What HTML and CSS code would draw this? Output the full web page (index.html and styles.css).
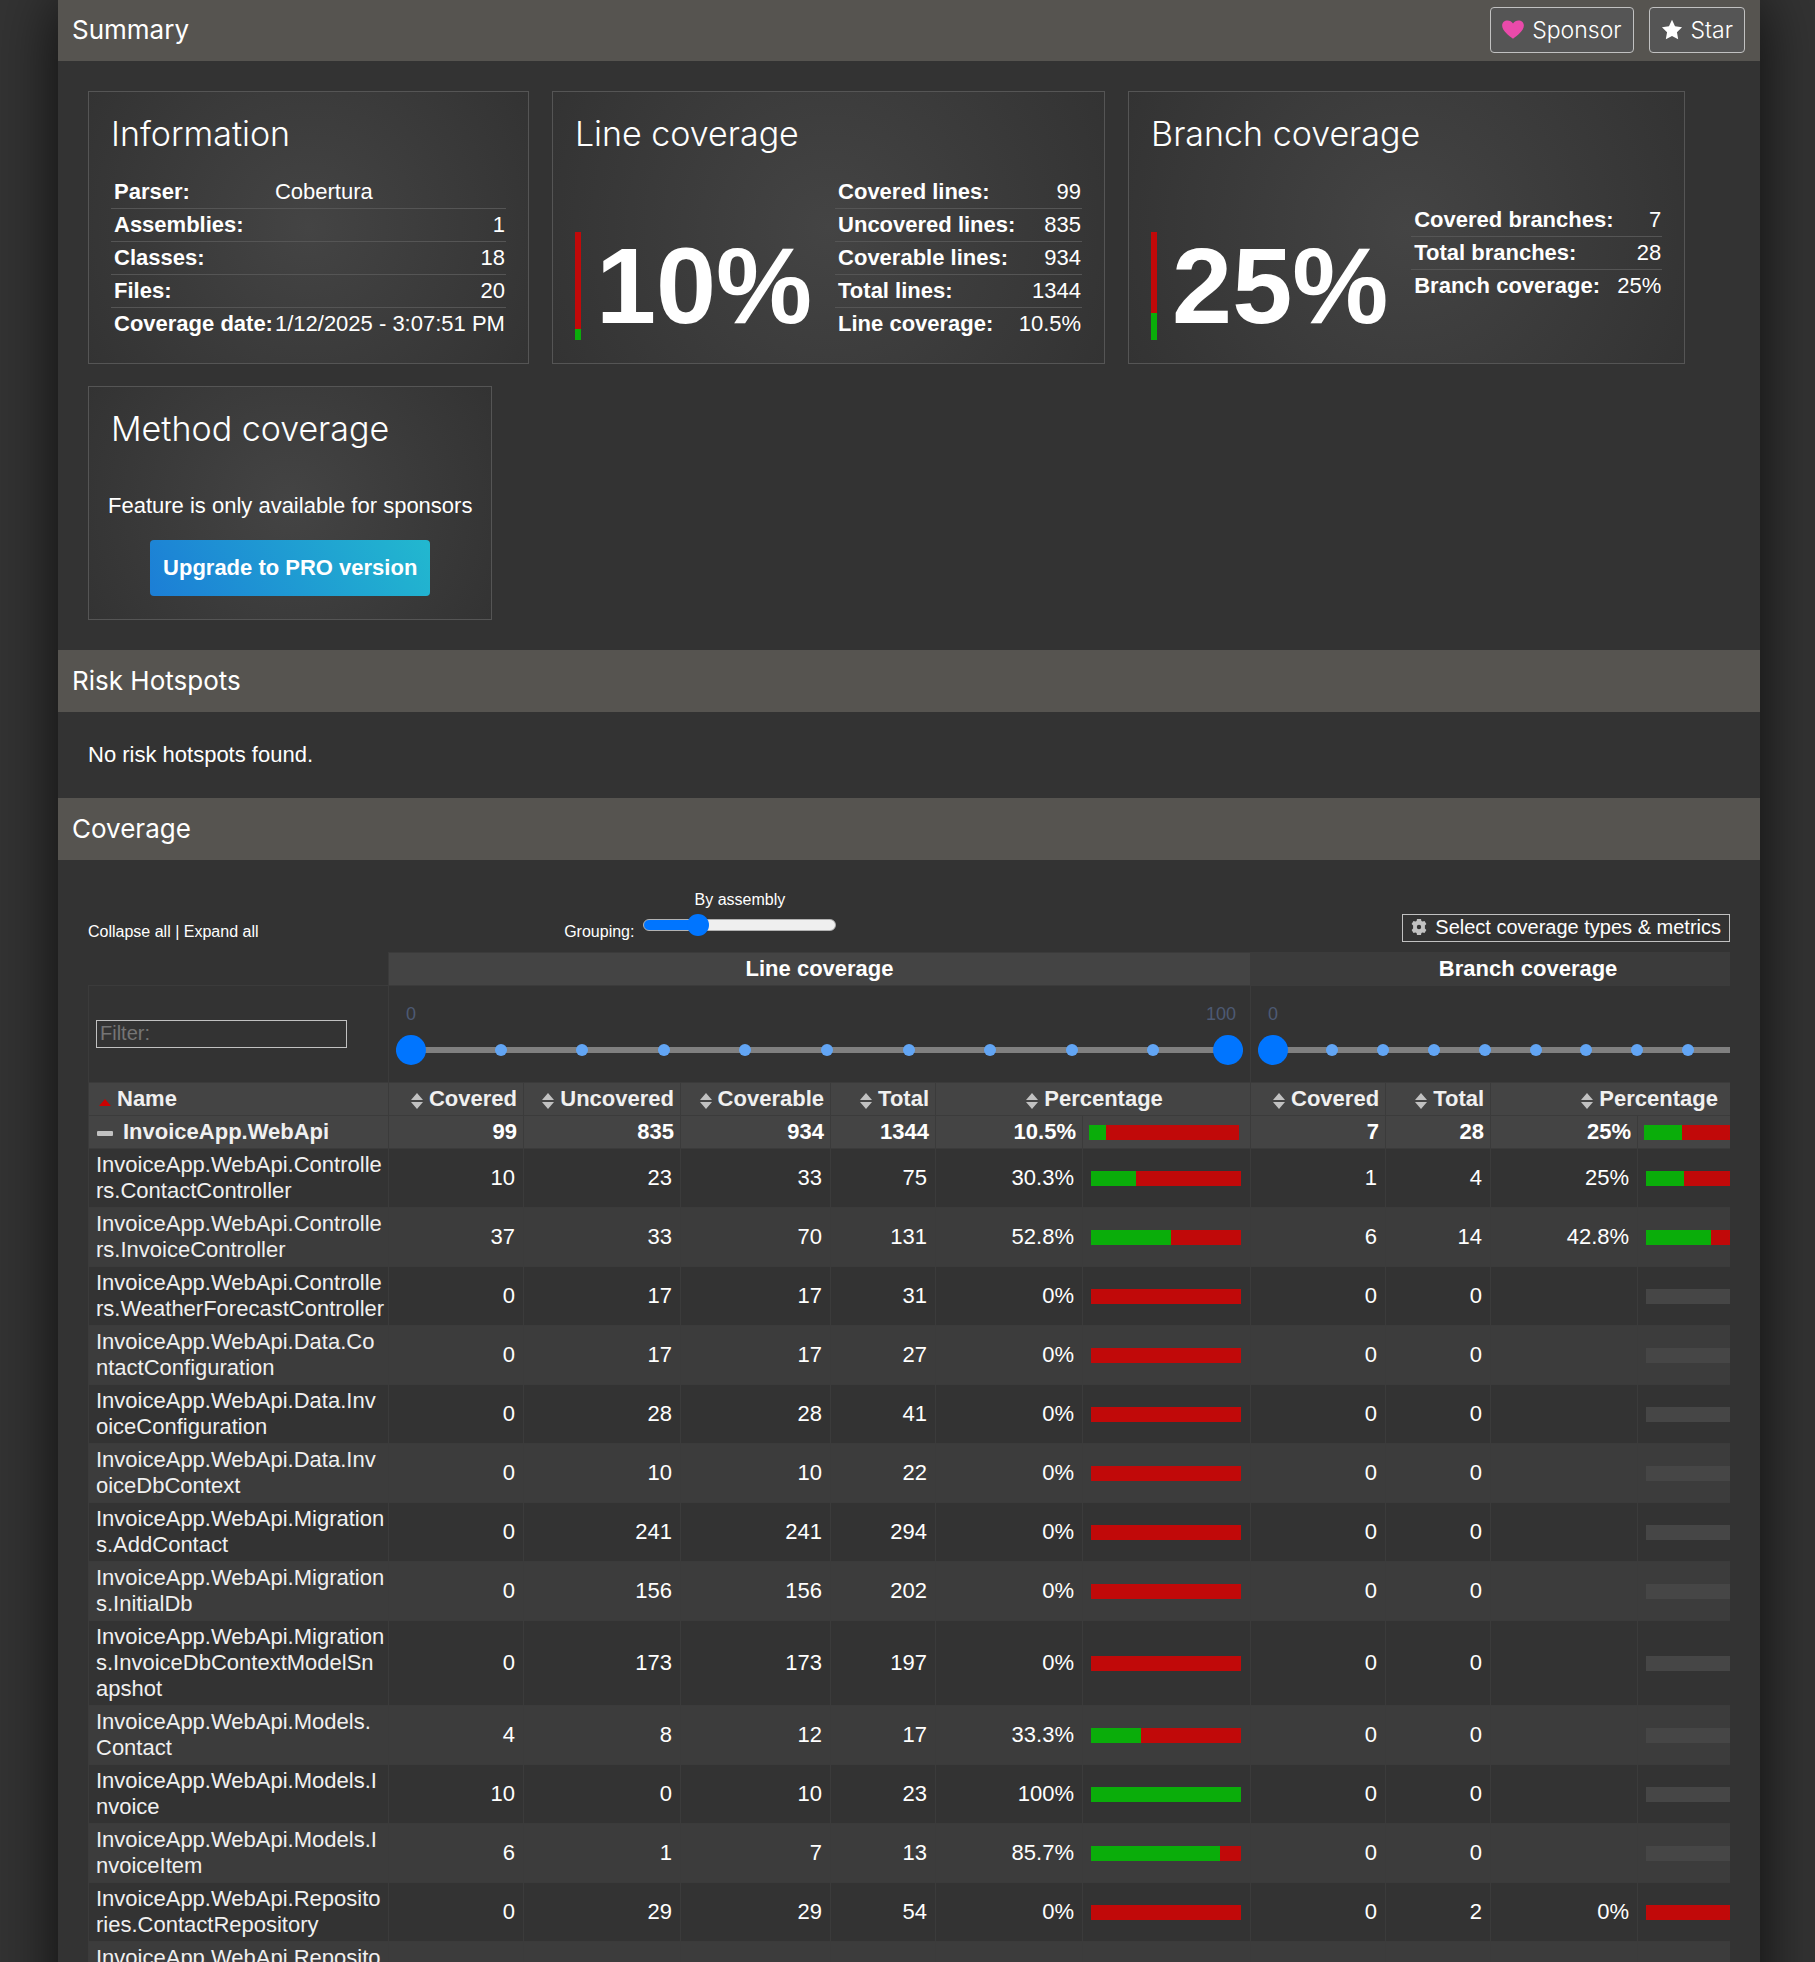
FILE: index.html
```html
<!DOCTYPE html>
<html lang="en">
<head>
<meta charset="utf-8">
<title>Summary - Coverage Report</title>
<link rel="stylesheet" href="styles.css">
</head>
<body>
<svg class="defs" aria-hidden="true">
  <symbol id="sort" viewBox="0 0 12 16"><path d="M6 0l6 7H0zM0 9h12l-6 7z" fill="#c1c1c1"/></symbol>
  <symbol id="sort-up" viewBox="0 0 12 16"><path d="M6 6l6 7H0z" fill="#c00"/></symbol>
</svg>
<main class="container">
  <header class="bar-title first">
    <h1>Summary</h1>
    <div class="actions">
      <a class="button" href="#sponsor"><svg width="22" height="22" viewBox="0 0 16 16" aria-hidden="true"><path fill="#ea4aaa" d="M8 14.3C5.200 12.400 0.100 8.700 0.100 4.800 0.100 2.200 1.900 1 4 1c1.600 0 3.100.9 4 2.300C8.900 1.900 10.400 1 12 1c2.100 0 3.900 1.200 3.900 3.800 0 3.900-5.100 7.600-7.900 9.500z"/></svg>Sponsor</a>
      <a class="button" href="#star"><svg width="22" height="22" viewBox="0 0 16 16" aria-hidden="true"><path fill="#fff" d="M8 .6l2.200 4.700 5.100.7-3.700 3.600.9 5.100L8 12.300l-4.500 2.400.9-5.100L.7 6l5.100-.7z"/></svg>Star</a>
    </div>
  </header>

  <section class="section cards">
    <article class="card">
      <h2>Information</h2>
      <div class="card-body">
        <table class="facts facts-info">
          <tr><th>Parser:</th><td class="left">Cobertura</td></tr>
          <tr><th>Assemblies:</th><td>1</td></tr>
          <tr><th>Classes:</th><td>18</td></tr>
          <tr><th>Files:</th><td>20</td></tr>
          <tr><th>Coverage date:</th><td>1/12/2025 - 3:07:51 PM</td></tr>
        </table>
      </div>
    </article>
    <article class="card">
      <h2>Line coverage</h2>
      <div class="card-body">
        <div class="gauge"><span style="height:10%"></span></div>
        <div class="big">10%</div>
        <table class="facts facts-line">
          <tr><th>Covered lines:</th><td>99</td></tr>
          <tr><th>Uncovered lines:</th><td>835</td></tr>
          <tr><th>Coverable lines:</th><td>934</td></tr>
          <tr><th>Total lines:</th><td>1344</td></tr>
          <tr><th>Line coverage:</th><td>10.5%</td></tr>
        </table>
      </div>
    </article>
    <article class="card">
      <h2>Branch coverage</h2>
      <div class="card-body">
        <div class="gauge"><span style="height:25%"></span></div>
        <div class="big">25%</div>
        <table class="facts facts-branch">
          <tr><th>Covered branches:</th><td>7</td></tr>
          <tr><th>Total branches:</th><td>28</td></tr>
          <tr><th>Branch coverage:</th><td>25%</td></tr>
        </table>
      </div>
    </article>
    <article class="card">
      <h2>Method coverage</h2>
      <div class="card-body pro">
        <p>Feature is only available for sponsors</p>
        <a class="pro-button" href="#pro">Upgrade to PRO version</a>
      </div>
    </article>
  </section>

  <header class="bar-title"><h1>Risk Hotspots</h1></header>
  <section class="section"><p>No risk hotspots found.</p></section>

  <header class="bar-title"><h1>Coverage</h1></header>
  <section class="section coverage">
    <div class="controls">
      <div><a href="#collapse">Collapse all</a> | <a href="#expand">Expand all</a></div>
      <div class="grouping">
        <label for="grouping">Grouping:</label>
        <div class="grouping-slider">
          <output for="grouping">By assembly</output>
          <input id="grouping" type="range" min="0" max="4" value="1">
        </div>
      </div>
      <button type="button" class="metrics"><svg width="16" height="16" viewBox="0 0 16 16" aria-hidden="true"><path fill="#c1c1c1" fill-rule="evenodd" d="M6 0h4l.4 2 1.200.6L13.500 2l1.900 3-1.500 1.400v3.200l1.500 1.400-1.900 3-1.900-.6-1.200.6L10 16H6l-.4-2-1.200-.6-1.900.6-1.900-3 1.500-1.400V6.400L.6 5l1.900-3 1.900.6L5.600 2zM8 5.800a2.200 2.200 0 100 4.400 2.200 2.200 0 000-4.400z"/></svg>Select coverage types &amp; metrics</button>
    </div>

    <div class="table-wrap">
    <table class="overview">
      <colgroup>
        <col class="c-name"><col class="c-covered"><col class="c-uncovered"><col class="c-coverable"><col class="c-total"><col class="c-pct"><col class="c-bar"><col class="c-covered"><col class="c-total"><col class="c-pct"><col class="c-bar">
      </colgroup>
      <thead>
        <tr class="groups"><td class="blank"></td><th colspan="6">Line coverage</th><th colspan="4" class="alt">Branch coverage</th></tr>
        <tr class="filters">
          <td><input class="filter" type="text" placeholder="Filter:" aria-label="Filter"></td>
          <td colspan="6">
            <div class="limits"><span>0</span><span>100</span></div>
            <div class="range">
              <div class="track"></div>
              <div class="ticks"><i></i><i></i><i></i><i></i><i></i><i></i><i></i><i></i><i></i><i></i><i></i></div>
              <input type="range" min="0" max="100" value="0" aria-label="Minimum line coverage">
              <input type="range" min="0" max="100" value="100" aria-label="Maximum line coverage">
            </div>
          </td>
          <td colspan="4">
            <div class="limits"><span>0</span></div>
            <div class="range">
              <div class="track"></div>
              <div class="ticks"><i></i><i></i><i></i><i></i><i></i><i></i><i></i><i></i><i></i><i></i><i></i></div>
              <input type="range" min="0" max="100" value="0" aria-label="Minimum branch coverage">
              <input type="range" min="0" max="100" value="100" aria-label="Maximum branch coverage">
            </div>
          </td>
        </tr>
        <tr class="heads">
          <th class="name"><a href="#name"><svg class="sort"><use href="#sort-up"/></svg>Name</a></th>
          <th><a href="#lc"><svg class="sort"><use href="#sort"/></svg>Covered</a></th>
          <th><a href="#lu"><svg class="sort"><use href="#sort"/></svg>Uncovered</a></th>
          <th><a href="#lb"><svg class="sort"><use href="#sort"/></svg>Coverable</a></th>
          <th><a href="#lt"><svg class="sort"><use href="#sort"/></svg>Total</a></th>
          <th colspan="2" class="center"><a href="#lp"><svg class="sort"><use href="#sort"/></svg>Percentage</a></th>
          <th><a href="#bc"><svg class="sort"><use href="#sort"/></svg>Covered</a></th>
          <th><a href="#bt"><svg class="sort"><use href="#sort"/></svg>Total</a></th>
          <th colspan="2" class="center"><a href="#bp"><svg class="sort"><use href="#sort"/></svg>Percentage</a></th>
        </tr>
      </thead>
      <tbody>
        <tr class="assembly"><th class="name"><a href="#assembly"><svg class="minus" viewBox="0 0 16 5"><rect width="16" height="5" rx="1" fill="#c1c1c1"/></svg>InvoiceApp.WebApi</a></th><th>99</th><th>835</th><th>934</th><th>1344</th><th>10.5%</th><th><div class="bar"><span style="width:11%"></span></div></th><th>7</th><th>28</th><th>25%</th><th><div class="bar"><span style="width:25%"></span></div></th></tr>
        <tr><td class="name"><a href="#c1">InvoiceApp.WebApi.Controlle<wbr>rs.ContactController</a></td><td>10</td><td>23</td><td>33</td><td>75</td><td>30.3%</td><td><div class="bar"><span style="width:30%"></span></div></td><td>1</td><td>4</td><td>25%</td><td><div class="bar"><span style="width:25%"></span></div></td></tr>
        <tr><td class="name"><a href="#c2">InvoiceApp.WebApi.Controlle<wbr>rs.InvoiceController</a></td><td>37</td><td>33</td><td>70</td><td>131</td><td>52.8%</td><td><div class="bar"><span style="width:53%"></span></div></td><td>6</td><td>14</td><td>42.8%</td><td><div class="bar"><span style="width:43%"></span></div></td></tr>
        <tr><td class="name"><a href="#c3">InvoiceApp.WebApi.Controlle<wbr>rs.WeatherForecastController</a></td><td>0</td><td>17</td><td>17</td><td>31</td><td>0%</td><td><div class="bar"></div></td><td>0</td><td>0</td><td></td><td><div class="bar none"></div></td></tr>
        <tr><td class="name"><a href="#c4">InvoiceApp.WebApi.Data.Co<wbr>ntactConfiguration</a></td><td>0</td><td>17</td><td>17</td><td>27</td><td>0%</td><td><div class="bar"></div></td><td>0</td><td>0</td><td></td><td><div class="bar none"></div></td></tr>
        <tr><td class="name"><a href="#c5">InvoiceApp.WebApi.Data.Inv<wbr>oiceConfiguration</a></td><td>0</td><td>28</td><td>28</td><td>41</td><td>0%</td><td><div class="bar"></div></td><td>0</td><td>0</td><td></td><td><div class="bar none"></div></td></tr>
        <tr><td class="name"><a href="#c6">InvoiceApp.WebApi.Data.Inv<wbr>oiceDbContext</a></td><td>0</td><td>10</td><td>10</td><td>22</td><td>0%</td><td><div class="bar"></div></td><td>0</td><td>0</td><td></td><td><div class="bar none"></div></td></tr>
        <tr><td class="name"><a href="#c7">InvoiceApp.WebApi.Migration<wbr>s.AddContact</a></td><td>0</td><td>241</td><td>241</td><td>294</td><td>0%</td><td><div class="bar"></div></td><td>0</td><td>0</td><td></td><td><div class="bar none"></div></td></tr>
        <tr><td class="name"><a href="#c8">InvoiceApp.WebApi.Migration<wbr>s.InitialDb</a></td><td>0</td><td>156</td><td>156</td><td>202</td><td>0%</td><td><div class="bar"></div></td><td>0</td><td>0</td><td></td><td><div class="bar none"></div></td></tr>
        <tr><td class="name"><a href="#c9">InvoiceApp.WebApi.Migration<wbr>s.InvoiceDbContextModelSn<wbr>apshot</a></td><td>0</td><td>173</td><td>173</td><td>197</td><td>0%</td><td><div class="bar"></div></td><td>0</td><td>0</td><td></td><td><div class="bar none"></div></td></tr>
        <tr><td class="name"><a href="#c10">InvoiceApp.WebApi.Models.<wbr>Contact</a></td><td>4</td><td>8</td><td>12</td><td>17</td><td>33.3%</td><td><div class="bar"><span style="width:33%"></span></div></td><td>0</td><td>0</td><td></td><td><div class="bar none"></div></td></tr>
        <tr><td class="name"><a href="#c11">InvoiceApp.WebApi.Models.I<wbr>nvoice</a></td><td>10</td><td>0</td><td>10</td><td>23</td><td>100%</td><td><div class="bar"><span style="width:100%"></span></div></td><td>0</td><td>0</td><td></td><td><div class="bar none"></div></td></tr>
        <tr><td class="name"><a href="#c12">InvoiceApp.WebApi.Models.I<wbr>nvoiceItem</a></td><td>6</td><td>1</td><td>7</td><td>13</td><td>85.7%</td><td><div class="bar"><span style="width:86%"></span></div></td><td>0</td><td>0</td><td></td><td><div class="bar none"></div></td></tr>
        <tr><td class="name"><a href="#c13">InvoiceApp.WebApi.Reposito<wbr>ries.ContactRepository</a></td><td>0</td><td>29</td><td>29</td><td>54</td><td>0%</td><td><div class="bar"></div></td><td>0</td><td>2</td><td>0%</td><td><div class="bar"></div></td></tr>
        <tr><td class="name"><a href="#c14">InvoiceApp.WebApi.Reposito<wbr>ries.InvoiceRepository</a></td><td></td><td></td><td></td><td></td><td></td><td></td><td></td><td></td><td></td><td></td></tr>
      </tbody>
    </table>
    </div>
  </section>
</main>
</body>
</html>
```
FILE: styles.css
```css
* { box-sizing: border-box; }

body {
  margin: 0;
  padding: 0 55px 0 58px;
  height: 100vh;
  overflow: hidden;
  background: #333;
  color: #fff;
  font: 22px/26px "Liberation Sans", Arial, sans-serif;
}

h1, h2, p { margin: 0; font-weight: 400; }
a { color: inherit; text-decoration: none; }
table { border-collapse: collapse; }
.defs { display: none; }

.container {
  background: #333;
  box-shadow: 0 0 60px rgba(0, 0, 0, 0.75);
}

/* Section title bars */
.bar-title {
  display: flex;
  align-items: center;
  justify-content: space-between;
  height: 62px;
  padding: 0 15px 0 14px;
  background: #565450;
  font-family: "Century Gothic", Inter, sans-serif;
}
.bar-title.first { height: 61px; padding-bottom: 2px; }
h1 { font-size: 26px; line-height: 32px; }
.actions { display: flex; gap: 15px; }
.button {
  display: flex;
  align-items: center;
  gap: 8px;
  height: 46px;
  padding: 0 11px;
  border: 1px solid #c1c1c1;
  border-radius: 4px;
  background: #555;
  font-size: 23px;
  font-weight: 300;
}

.section { padding: 30px; }

/* Summary cards */
.cards { display: flex; flex-wrap: wrap; gap: 22px 23px; }
.card {
  padding: 22px 22px 23px;
  border: 1px solid #555;
  background: radial-gradient(circle, #444, #333);
}
h2 {
  margin-bottom: 22px;
  font: 300 34px/40px "Century Gothic", Inter, sans-serif;
}
.card-body { display: flex; align-items: flex-end; min-height: 164px; }
.gauge {
  display: flex;
  align-items: flex-end;
  width: 6px;
  height: 108px;
  margin-right: 15px;
  background: #c10909;
}
.gauge span { width: 100%; background: #0aad0a; }
.big { margin-right: 23px; font-size: 108px; font-weight: 700; line-height: 108px; }

.facts { border-collapse: separate; border-spacing: 0; }
.facts th, .facts td { padding: 3px 1px; border-bottom: 1px solid #555; white-space: nowrap; }
.facts tr:last-child > * { border-bottom: 0; }
.facts th { padding-left: 3px; text-align: left; }
.facts td { text-align: right; }
.facts td.left { text-align: left; }
.facts-info { width: 394px; }
.facts-line { width: 247px; }
.facts-branch { width: 251px; margin-bottom: 38px; }

.pro { flex-direction: column; align-items: center; gap: 21px; min-height: 0; padding-top: 22px; }
.pro p { margin: 0 -3px; }
.pro-button {
  padding: 15px 13px;
  border-radius: 4px;
  background: linear-gradient(60deg, #1c7ed6, #22b8cf);
  font-weight: 700;
}

/* Coverage controls */
.controls {
  display: grid;
  grid-template-columns: 29% 1fr auto;
  align-items: end;
  margin-bottom: 10px;
  font-size: 16px;
  line-height: 20px;
}
.grouping { display: flex; align-items: flex-end; gap: 9px; }
.grouping-slider { display: flex; flex-direction: column; align-items: center; gap: 3px; padding-bottom: 5px; }
.grouping-slider input {
  width: 193px;
  height: 24px;
  margin: 0;
  appearance: none;
  background: none;
}
.grouping-slider input::-webkit-slider-runnable-track {
  height: 12px;
  border: 1px solid #b2b2b2;
  border-radius: 6px;
  background: linear-gradient(90deg, #0075ff 28%, #efefef 28%);
}
.grouping-slider input::-webkit-slider-thumb {
  width: 22px;
  height: 22px;
  margin-top: -6px;
  appearance: none;
  border-radius: 50%;
  background: #0075ff;
}
.metrics {
  display: flex;
  align-items: center;
  gap: 8px;
  height: 28px;
  padding: 0 8px 2px;
  border: 1px solid #c1c1c1;
  background: #333;
  color: #fff;
  font: 20px/24px "Liberation Sans", Arial, sans-serif;
}

/* Overview table */
.table-wrap { overflow: hidden; }
.overview { width: 1718px; table-layout: fixed; }
.c-name { width: 300px; }
.c-covered { width: 135px; }
.c-uncovered { width: 157px; }
.c-coverable { width: 150px; }
.c-total { width: 105px; }
.c-pct { width: 147px; }
.c-bar { width: 168px; }
.overview th, .overview td {
  padding: 3px 8px;
  border: 1px solid #3b3b3b;
  text-align: right;
}
.overview th { padding: 3px 6px; background: #444; }
.overview tbody tr:nth-child(odd) td { background: #3c3c3c; }
.overview .groups th { text-align: center; }
.overview .groups .alt { background: #3b3b3b; }
.overview .groups .blank { border-top: 0; border-left: 0; }
.overview .center { text-align: center; }
.overview .heads th { color: #f0f0f0; }
.overview .name { padding-left: 7px; padding-right: 0; text-align: left; color: #f0f0f0; }
.overview .filters td { height: 97px; padding: 0 7px 1px; text-align: left; }

.sort { width: 12px; height: 16px; margin: 0 6px 0 3px; vertical-align: -3px; }
.minus { width: 16px; height: 5px; margin: 0 10px 0 1px; vertical-align: 3px; }

.filter {
  display: block;
  width: 251px;
  height: 28px;
  padding: 0 3px;
  border: 1px solid #c1c1c1;
  background: #333;
  color: #fff;
  font: 20px/24px "Liberation Sans", Arial, sans-serif;
}
.filter::placeholder { color: #757575; }

.bar { width: 150px; height: 15px; background: #c10909; }
.bar span { display: block; height: 100%; background: #0aad0a; }
.bar.none { background: #464646; }

/* Two-handled range filter */
.limits {
  display: flex;
  justify-content: space-between;
  margin-bottom: 10px;
  padding: 0 7px 0 10px;
  color: #4d5a73;
  font-size: 18px;
  line-height: 22px;
}
.range { display: grid; align-items: center; height: 30px; }
.range > * { grid-area: 1 / 1; }
.track { height: 6px; border-radius: 3px; background: #808080; }
.ticks { display: flex; justify-content: space-between; padding: 0 2px 0 17px; }
.ticks i { width: 12px; height: 12px; border-radius: 50%; background: #62a5f4; }
.range input {
  width: 100%;
  height: 30px;
  margin: 0;
  appearance: none;
  background: none;
  pointer-events: none;
}
.range input::-webkit-slider-thumb {
  width: 30px;
  height: 30px;
  appearance: none;
  border-radius: 50%;
  background: #0075ff;
  pointer-events: auto;
}
```
